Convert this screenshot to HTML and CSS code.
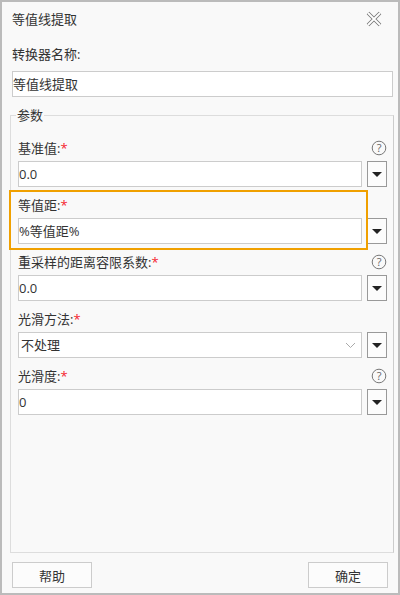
FILE: index.html
```html
<!DOCTYPE html>
<html lang="zh-CN">
<head>
  <meta charset="UTF-8">
  <meta name="viewport" content="width=device-width, initial-scale=1">
  <title>等值线提取</title>
  <link rel="stylesheet" href="styles.css">
</head>
<body>

<div class="dialog">
  <div class="dialog-header">
    <span>等值线提取</span>
    <svg class="close-icon" width="18" height="18" viewBox="0 0 18 18" aria-label="关闭">
      <path class="close-outer" d="M3 3 15 15M15 3 3 15"/>
      <path class="close-inner" d="M3 3 15 15M15 3 3 15"/>
    </svg>
  </div>

  <div class="name-label">转换器名称:</div>
  <div class="field name-field">等值线提取</div>

  <fieldset class="params">
    <legend>参数</legend>

    <div class="param">
      <div class="param-label">基准值:<span class="required">*</span></div>
      <svg class="help-icon" width="16" height="16" viewBox="0 0 16 16"><circle cx="8" cy="8" r="6.8"/><text x="8" y="11.8">?</text></svg>
      <div class="field">0.0</div>
      <button class="drop-btn" aria-label="展开"><span class="triangle"></span></button>
    </div>

    <div class="param">
      <div class="param-label">等值距:<span class="required">*</span></div>
      <div class="field">%等值距%</div>
      <button class="drop-btn" aria-label="展开"><span class="triangle"></span></button>
      <div class="highlight"></div>
    </div>

    <div class="param">
      <div class="param-label">重采样的距离容限系数:<span class="required">*</span></div>
      <svg class="help-icon" width="16" height="16" viewBox="0 0 16 16"><circle cx="8" cy="8" r="6.8"/><text x="8" y="11.8">?</text></svg>
      <div class="field">0.0</div>
      <button class="drop-btn" aria-label="展开"><span class="triangle"></span></button>
    </div>

    <div class="param">
      <div class="param-label">光滑方法:<span class="required">*</span></div>
      <div class="field select-field">
        <span>不处理</span>
        <svg width="11" height="7" viewBox="0 0 11 7"><path class="chevron" d="M1 1 5.5 5.5 10 1"/></svg>
      </div>
      <button class="drop-btn" aria-label="展开"><span class="triangle"></span></button>
    </div>

    <div class="param">
      <div class="param-label">光滑度:<span class="required">*</span></div>
      <svg class="help-icon" width="16" height="16" viewBox="0 0 16 16"><circle cx="8" cy="8" r="6.8"/><text x="8" y="11.8">?</text></svg>
      <div class="field">0</div>
      <button class="drop-btn" aria-label="展开"><span class="triangle"></span></button>
    </div>
  </fieldset>

  <div class="dialog-footer">
    <button class="footer-btn">帮助</button>
    <button class="footer-btn">确定</button>
  </div>
</div>

</body>
</html>
```

FILE: styles.css
```css
* {
  box-sizing: border-box;
}
body {
  margin: 0;
  font-family: "Open Sans", "Noto Sans CJK SC", sans-serif;
  font-size: 13px;
  color: #333;
}
.dialog {
  width: 400px;
  height: 595px;
  background: #f9f9f9;
  border: 2px solid #bbb;
  padding: 0 4px 5px 8px;
  display: flex;
  flex-direction: column;
}
.dialog-header {
  height: 33px;
  padding: 0 11px 0 2px;
  display: flex;
  align-items: center;
  justify-content: space-between;
}
.close-icon {
  fill: none;
}
.close-outer {
  stroke: #777;
  stroke-width: 3.6;
}
.close-inner {
  stroke: #fff;
  stroke-width: 1.8;
}
.name-label {
  height: 36px;
  padding: 10px 0 0 2px;
  line-height: 18px;
}
.field {
  grid-column: 1;
  grid-row: 2;
  height: 26px;
  line-height: 24px;
  background: #fff;
  border: 1px solid #ccc;
  padding-left: 0;
  white-space: nowrap;
}
.name-field {
  margin-left: 2px;
  margin-right: 1px;
}
.params {
  margin: 9px 0 0 0;
  padding: 0 6px 0 7px;
  height: 447px;
  border: 1px solid #ddd;
  border-right-color: #ccc;
}
.params legend {
  margin-left: -2px;
  padding: 0 1px;
  line-height: 18px;
}
.param {
  position: relative;
  display: grid;
  grid-template-columns: 344px 20px;
  column-gap: 5px;
  grid-template-rows: 31px 26px;
  justify-content: start;
}
.param:first-of-type {
  grid-template-rows: 29px 26px;
  margin-top: 8px;
}
.param-label {
  grid-column: 1;
  grid-row: 1;
  line-height: 18px;
  padding-top: 9px;
}
.param:first-of-type .param-label {
  padding-top: 7px;
}
.required {
  color: #f5222d;
}
.help-icon {
  grid-column: 2;
  grid-row: 1;
  align-self: end;
  justify-self: center;
  margin-bottom: 5px;
  margin-left: 4px;
}
.help-icon circle {
  fill: none;
  stroke: #777;
  stroke-width: 1;
}
.help-icon text {
  font-size: 11px;
  text-anchor: middle;
  fill: #666;
}
.drop-btn {
  grid-column: 2;
  grid-row: 2;
  width: 20px;
  height: 26px;
  padding: 0;
  background: #fcfcfc;
  border: 1px solid #999;
  display: flex;
  align-items: center;
  justify-content: center;
}
.triangle {
  width: 0;
  height: 0;
  border-left: 5px solid transparent;
  border-right: 5px solid transparent;
  border-top: 5px solid #222;
}
.select-field {
  display: flex;
  align-items: center;
  justify-content: space-between;
  padding: 0 5px 0 2px;
}
.chevron {
  fill: none;
  stroke: #aaa;
  stroke-width: 1;
}
.highlight {
  position: absolute;
  left: -9px;
  top: 3px;
  bottom: -6px;
  width: 359px;
  border: 2px solid #f0a000;
  pointer-events: none;
}
.dialog-footer {
  margin-top: 9px;
  padding: 0 6px 0 2px;
  display: flex;
  justify-content: space-between;
}
.footer-btn {
  width: 80px;
  height: 26px;
  padding: 0;
  background: #fcfcfc;
  border: 1px solid #ccc;
  font: inherit;
  color: #333;
}
```
